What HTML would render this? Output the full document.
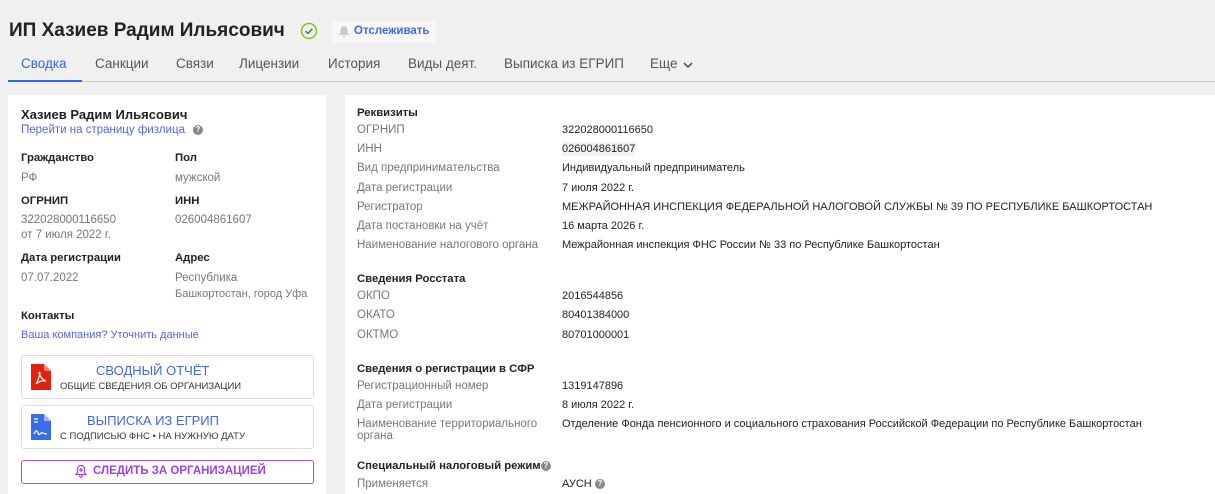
<!DOCTYPE html>
<html><head><meta charset="utf-8"><style>
*{margin:0;padding:0;box-sizing:border-box}
body{width:1215px;height:494px;overflow:hidden;background:#f0f0f0;font-family:"Liberation Sans","Noto Sans CJK SC",sans-serif;position:relative;color:#222}
.a{position:absolute;white-space:nowrap;line-height:14px}
.l{color:#777;font-size:11.5px}
.v{color:#222;font-size:11px}
.h{font-weight:bold;font-size:11.3px;color:#222}
.lk{color:#5566dd;font-size:11.5px}
.tab{position:absolute;top:56px;font-size:13.5px;color:#555;line-height:16px}
.card{position:absolute;background:#fff;top:95px;height:399px}
.btn{position:absolute;left:21px;width:293px;border:1px solid #ddd;border-radius:3px;background:#fff}
.q{position:absolute;width:10px;height:10px;border-radius:50%;background:#888;color:#fff;font-size:8px;line-height:10px;text-align:center;font-weight:bold}
</style></head><body>
<div class="a" style="left:9px;top:18px;font-size:19px;line-height:26px;font-weight:bold;color:#222">ИП Хазиев Радим Ильясович</div>
<svg style="position:absolute;left:300px;top:22px" width="18" height="18" viewBox="0 0 18 18"><circle cx="9" cy="9" r="7.5" fill="none" stroke="#8bb82e" stroke-width="1.4"/><path d="M5.5 9.2l2.4 2.3 4.4-4.6" fill="none" stroke="#2a8a2a" stroke-width="1.5"/></svg>
<div style="position:absolute;left:332px;top:21px;width:104px;height:22px;background:#f8f8f8;border-radius:4px"></div>
<svg style="position:absolute;left:338px;top:25px" width="12" height="14" viewBox="0 0 12 14"><path d="M6 1c-2.5 0-3.5 2-3.5 4v3L1 10h10L9.5 8V5C9.5 3 8.5 1 6 1z M4.5 11a1.5 1.5 0 003 0z" fill="#ccc"/></svg>
<div class="a" style="left:354px;top:24px;font-size:11.5px;font-weight:bold;color:#4466dd">Отслеживать</div>
<div class="tab" style="left:21px;color:#3366ee">Сводка</div>
<div class="tab" style="left:95px">Санкции</div>
<div class="tab" style="left:176px">Связи</div>
<div class="tab" style="left:239px">Лицензии</div>
<div class="tab" style="left:328px">История</div>
<div class="tab" style="left:408px">Виды деят.</div>
<div class="tab" style="left:504px">Выписка из ЕГРИП</div>
<div class="tab" style="left:650px">Еще</div>
<svg style="position:absolute;left:682px;top:60px" width="12" height="10"><path d="M2 3l4 4 4-4" fill="none" stroke="#555" stroke-width="1.6"/></svg>
<div style="position:absolute;left:8px;top:81px;width:1207px;height:1px;background:#ccc"></div>
<div style="position:absolute;left:8px;top:80px;width:74px;height:2px;background:#3366ee"></div>

<div class="card" style="left:8px;width:318px"></div>
<div class="a" style="left:21px;top:108px;font-size:13px;font-weight:bold">Хазиев Радим Ильясович</div>
<div class="a lk" style="left:21px;top:123px">Перейти на страницу физлица</div>
<div class="q" style="left:193px;top:125px">?</div>
<div class="a h" style="left:21px;top:151px">Гражданство</div><div class="a h" style="left:175px;top:151px">Пол</div>
<div class="a l" style="left:21px;top:171px">РФ</div><div class="a l" style="left:175px;top:171px">мужской</div>
<div class="a h" style="left:21px;top:194px">ОГРНИП</div><div class="a h" style="left:175px;top:194px">ИНН</div>
<div class="a l" style="left:21px;top:213px">322028000116650</div><div class="a l" style="left:175px;top:213px">026004861607</div>
<div class="a l" style="left:21px;top:228px">от 7 июля 2022 г.</div>
<div class="a h" style="left:21px;top:251px">Дата регистрации</div><div class="a h" style="left:175px;top:251px">Адрес</div>
<div class="a l" style="left:21px;top:271px">07.07.2022</div><div class="a l" style="left:175px;top:271px">Республика</div>
<div class="a l" style="left:175px;top:287px;font-size:11px">Башкортостан, город Уфа</div>
<div class="a h" style="left:21px;top:309px">Контакты</div>
<div class="a lk" style="left:21px;top:328px;font-size:11px">Ваша компания? Уточнить данные</div>

<div class="btn" style="top:355px;height:44px"></div>
<svg style="position:absolute;left:31px;top:364px" width="20" height="26" viewBox="0 0 20 26"><path d="M0 0h13l7 7v19H0z" fill="#e5200c"/><path d="M13 0v7h7" fill="#f77"/><path d="M5 20c3-6 4-10 4-11s-1-1-1 0 2 6 7 8c-4-1-8 1-10 3z" fill="none" stroke="#fff" stroke-width="1.2"/></svg>
<div class="a" style="left:96px;top:364px;font-size:13px;color:#4466dd">СВОДНЫЙ ОТЧЁТ</div>
<div class="a" style="left:60px;top:380px;font-size:9.5px;color:#333">ОБЩИЕ СВЕДЕНИЯ ОБ ОРГАНИЗАЦИИ</div>
<div class="btn" style="top:405px;height:44px"></div>
<svg style="position:absolute;left:31px;top:414px" width="20" height="26" viewBox="0 0 20 26"><path d="M0 0h13l7 7v19H0z" fill="#3a6ee8"/><path d="M13 0v7h7" fill="#9bb8f5"/><path d="M3 5h4M3 8h4" stroke="#fff" stroke-width="1.3"/><path d="M3 20c2-4 3-4 4-1s2 1 3 0 2 1 6 1" fill="none" stroke="#fff" stroke-width="1.2"/></svg>
<div class="a" style="left:87px;top:414px;font-size:13px;color:#4466dd">ВЫПИСКА ИЗ ЕГРИП</div>
<div class="a" style="left:60px;top:430px;font-size:9.5px;color:#333">С ПОДПИСЬЮ ФНС • НА НУЖНУЮ ДАТУ</div>
<div class="btn" style="top:460px;height:24px;border-color:#a64ee0"></div>
<svg style="position:absolute;left:75px;top:464px" width="12" height="14" viewBox="0 0 12 14"><path d="M6 1.5c-2.5 0-3.5 2-3.5 4v3L1 10.5h10L9.5 8.5v-3c0-2-1-4-3.5-4zM4.5 11.5a1.5 1.5 0 003 0M6 4v4M4 6h4" fill="none" stroke="#a040e0" stroke-width="1.2"/></svg>
<div class="a" style="left:93px;top:464px;font-size:11.5px;font-weight:bold;color:#a040e0">СЛЕДИТЬ ЗА ОРГАНИЗАЦИЕЙ</div>

<div class="card" style="left:345px;width:870px"></div>
<div class="a h" style="left:357px;top:106px">Реквизиты</div>
<div class="a l" style="left:357px;top:123px">ОГРНИП</div><div class="a v" style="left:562px;top:123px">322028000116650</div>
<div class="a l" style="left:357px;top:142px">ИНН</div><div class="a v" style="left:562px;top:142px;background:#f2f2f2">026004861607</div>
<div class="a l" style="left:357px;top:161px">Вид предпринимательства</div><div class="a v" style="left:562px;top:161px">Индивидуальный предприниматель</div>
<div class="a l" style="left:357px;top:181px">Дата регистрации</div><div class="a v" style="left:562px;top:181px">7 июля 2022 г.</div>
<div class="a l" style="left:357px;top:200px">Регистратор</div><div class="a v" style="left:562px;top:200px">МЕЖРАЙОННАЯ ИНСПЕКЦИЯ ФЕДЕРАЛЬНОЙ НАЛОГОВОЙ СЛУЖБЫ № 39 ПО РЕСПУБЛИКЕ БАШКОРТОСТАН</div>
<div class="a l" style="left:357px;top:219px">Дата постановки на учёт</div><div class="a v" style="left:562px;top:219px">16 марта 2026 г.</div>
<div class="a l" style="left:357px;top:238px">Наименование налогового органа</div><div class="a v" style="left:562px;top:238px">Межрайонная инспекция ФНС России № 33 по Республике Башкортостан</div>
<div class="a h" style="left:357px;top:272px">Сведения Росстата</div>
<div class="a l" style="left:357px;top:289px">ОКПО</div><div class="a v" style="left:562px;top:289px">2016544856</div>
<div class="a l" style="left:357px;top:308px">ОКАТО</div><div class="a v" style="left:562px;top:308px">80401384000</div>
<div class="a l" style="left:357px;top:328px">ОКТМО</div><div class="a v" style="left:562px;top:328px">80701000001</div>
<div class="a h" style="left:357px;top:362px">Сведения о регистрации в СФР</div>
<div class="a l" style="left:357px;top:379px">Регистрационный номер</div><div class="a v" style="left:562px;top:379px">1319147896</div>
<div class="a l" style="left:357px;top:398px">Дата регистрации</div><div class="a v" style="left:562px;top:398px">8 июля 2022 г.</div>
<div class="a l" style="left:357px;top:417px">Наименование территориального</div><div class="a v" style="left:562px;top:417px">Отделение Фонда пенсионного и социального страхования Российской Федерации по Республике Башкортостан</div>
<div class="a l" style="left:357px;top:429px">органа</div>
<div class="a h" style="left:357px;top:459px">Специальный налоговый режим</div>
<div class="q" style="left:541px;top:461px">?</div>
<div class="a l" style="left:357px;top:477px">Применяется</div><div class="a v" style="left:562px;top:477px">АУСН</div>
<div class="q" style="left:595px;top:479px">?</div>
</body></html>
